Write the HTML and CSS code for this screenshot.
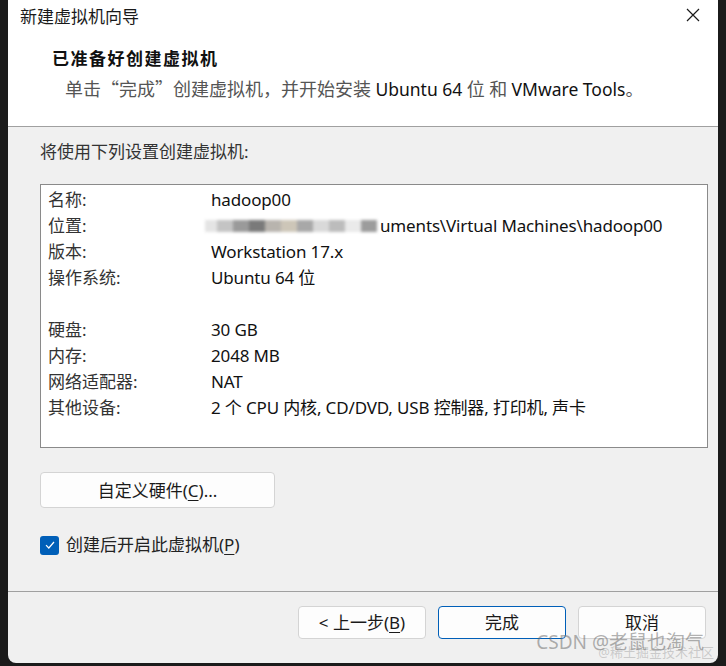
FILE: index.html
```html
<!DOCTYPE html>
<html lang="zh-CN">
<head>
<meta charset="utf-8">
<title>新建虚拟机向导</title>
<link rel="stylesheet" href="styles.css">
</head>
<body>
<div class="window">
  <div class="top">
    <div class="titlebar">
      <span class="title">新建虚拟机向导</span>
      <svg class="close" width="14" height="14" viewBox="0 0 14 14"><path d="M1 1L13 13M13 1L1 13" stroke="#1a1a1a" stroke-width="1.2" fill="none"/></svg>
    </div>
    <div class="header">
      <div class="h-title">已准备好创建虚拟机</div>
      <div class="h-sub"><span class="cjk">单击“完成”创建虚拟机，并开始安装</span> <span class="lat">Ubuntu 64</span> <span class="cjk">位</span> <span class="cjk">和</span> <span class="lat">VMware Tools</span><span class="cjk">。</span></div>
    </div>
  </div>
  <div class="body">
    <div class="intro">将使用下列设置创建虚拟机:</div>
    <div class="summary">
      <div class="row"><span class="k">名称:</span><span class="v">hadoop00</span></div>
      <div class="row"><span class="k">位置:</span><span class="v"><span class="mosaic"><i class="m1"></i><i class="m2"></i><i class="m3"></i><i class="m4"></i><i class="m5"></i><i class="m6"></i><i class="m7"></i><i class="m8"></i><i class="m9"></i><i class="m10"></i><i class="m11"></i></span>uments\Virtual Machines\hadoop00</span></div>
      <div class="row"><span class="k">版本:</span><span class="v">Workstation 17.x</span></div>
      <div class="row"><span class="k">操作系统:</span><span class="v">Ubuntu 64 位</span></div>
      <div class="row"><span class="k"></span><span class="v"></span></div>
      <div class="row"><span class="k">硬盘:</span><span class="v">30 GB</span></div>
      <div class="row"><span class="k">内存:</span><span class="v">2048 MB</span></div>
      <div class="row"><span class="k">网络适配器:</span><span class="v">NAT</span></div>
      <div class="row"><span class="k">其他设备:</span><span class="v">2 个 CPU 内核, CD/DVD, USB 控制器, 打印机, 声卡</span></div>
    </div>
    <button class="btn hw">自定义硬件(<u>C</u>)...</button>
    <label class="check"><span class="box"><svg width="10" height="8" viewBox="0 0 10 8"><path d="M1 4.2L3.8 7L9 1" stroke="#fff" stroke-width="1.2" fill="none"/></svg></span>创建后开启此虚拟机(<u>P</u>)</label>
  </div>
  <div class="footer">
    <button class="btn">&lt; 上一步(<u>B</u>)</button>
    <button class="btn primary">完成</button>
    <button class="btn">取消</button>
  </div>
  <div class="watermark"><span class="wm1">CSDN @老鼠也淘气</span><span class="wm2">@稀土掘金技术社区</span></div>
</div>
</body>
</html>
```
FILE: styles.css
```css
html, body {
  margin: 0;
  padding: 0;
}
body {
  background: #1b1b1b;
  width: 726px;
  height: 666px;
  overflow: hidden;
  font-family: "Segoe UI", "Noto Sans", "Noto Sans CJK SC", sans-serif;
  font-size: 17px;
  color: #1a1a1a;
}
.window {
  position: relative;
  margin-left: 8px;
  width: 710px;
  height: 663px;
  background: #f0f0f0;
  border-radius: 0 0 8px 8px;
  overflow: hidden;
  display: flex;
  flex-direction: column;
}
.top {
  background: #ffffff;
  height: 126px;
  border-bottom: 1px solid #a0a0a0;
}
.titlebar {
  height: 30px;
  display: flex;
  align-items: center;
  justify-content: space-between;
  padding: 0 18px 0 12px;
}
.title {
  font-size: 17px;
  color: #1a1a1a;
}
.header {
  padding: 17px 0 0 44px;
}
.h-title {
  font-weight: 700;
  font-size: 17px;
  letter-spacing: 1.5px;
  line-height: 24px;
  color: #111;
}
.h-sub {
  margin-top: 5px;
  padding-left: 13px;
  line-height: 24px;
  color: #555;
  white-space: nowrap;
}
.h-sub .cjk {
  font-family: "Noto Sans CJK SC", sans-serif;
  font-size: 18px;
}
.h-sub .lat {
  color: #111;
  font-size: 17.5px;
}
.body {
  flex: 1;
  padding: 13px 16px 0 32px;
}
.intro {
  line-height: 24px;
  color: #333;
}
.summary {
  margin-top: 20px;
  width: 659px;
  height: 260px;
  background: #ffffff;
  border: 1px solid #8a8a8a;
  padding-top: 2px;
  padding-left: 7px;
  box-sizing: content-box;
}
.row {
  display: flex;
  height: 26px;
  line-height: 26px;
}
.k {
  width: 163px;
  color: #333;
}
.v {
  color: #111;
  display: flex;
  align-items: center;
  white-space: nowrap;
  letter-spacing: -0.15px;
}
.mosaic {
  display: inline-flex;
  height: 12px;
  margin-left: -6px;
  margin-right: 3px;
  filter: blur(1.5px);
}
.mosaic i {
  display: block;
  width: 16px;
  height: 12px;
}
.m1 { background: #e4e4e4; width: 12px !important; }
.m2 { background: #c4c4c4; }
.m3 { background: #9a9a9a; }
.m4 { background: #7a7a7a; }
.m5 { background: #b8b4ae; }
.m6 { background: #cdc6b8; }
.m7 { background: #a8a8a8; }
.m8 { background: #d9d9d9; }
.m9 { background: #bcbcbc; }
.m10 { background: #eaeaea; }
.m11 { background: #9c9c9c; }
.btn {
  font-family: inherit;
  font-size: 17px;
  color: #1a1a1a;
  background: #fdfdfd;
  border: 1px solid #d4d4d4;
  border-radius: 4px;
  height: 33px;
  padding: 0;
  line-height: 1;
}
.btn u {
  text-decoration: underline;
  text-underline-offset: 3px;
}
.hw {
  display: block;
  margin-top: 24px;
  width: 235px;
  height: 36px;
}
.check {
  display: flex;
  align-items: center;
  margin-top: 25px;
  line-height: 24px;
  color: #222;
}
.check u {
  text-underline-offset: 3px;
}
.box {
  width: 19px;
  height: 19px;
  border-radius: 3px;
  background: #005fb8;
  display: inline-flex;
  align-items: center;
  justify-content: center;
  margin-right: 7px;
}
.footer {
  height: 57px;
  border-top: 1px solid #a0a0a0;
  display: flex;
  justify-content: flex-end;
  align-items: flex-start;
  gap: 12px;
  padding: 14px 12px 0 0;
}
.footer .btn {
  width: 128px;
  height: 33px;
}
.footer .primary {
  border: 1px solid #005fb8;
}
.watermark {
  position: absolute;
  right: 4px;
  bottom: 4px;
  display: flex;
  flex-direction: column;
  align-items: flex-end;
  pointer-events: none;
}
.wm1 {
  font-size: 19px;
  color: rgba(110, 110, 110, 0.55);
  line-height: 22px;
  margin-right: 10px;
}
.wm2 {
  font-size: 13px;
  color: rgba(130, 130, 130, 0.35);
  line-height: 14px;
  margin-top: -8px;
}
```
